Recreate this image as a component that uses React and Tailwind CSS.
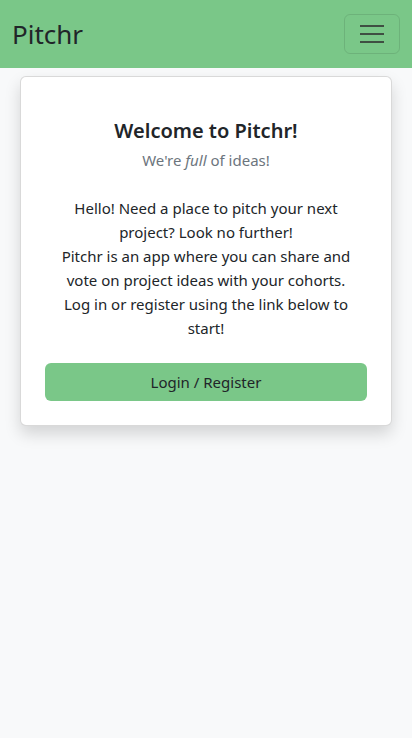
import React from 'react';

const App = () => {
  return (
    <div className="min-h-[738px] w-full bg-[#f8f9fa] font-['Noto_Sans',sans-serif] text-[#212529]">
      <nav className="flex h-[68px] items-center justify-between bg-[#7ac788] pl-3 pr-3">
        <span className="text-[26px] leading-none">Pitchr</span>
        <button className="flex h-[40px] w-[56px] items-center justify-center rounded-[6px] border border-black/10">
          <svg width="26" height="22" viewBox="0 0 26 22">
            <path d="M1 3h24M1 11h24M1 19h24" stroke="#3f4f42" strokeWidth="2" />
          </svg>
        </button>
      </nav>
      <div className="px-5 pt-2">
        <div className="rounded-[6px] border border-black/15 bg-white px-6 pb-6 pt-10 text-center shadow-[0_8px_16px_rgba(0,0,0,0.15)]">
          <h1 className="text-[20px] font-semibold leading-[28px]">Welcome to Pitchr!</h1>
          <p className="mt-[3px] text-[15px] leading-6 text-[#6c757d]">
            We're <em>full</em> of ideas!
          </p>
          <p className="mt-6 px-3 text-[15px] leading-6">
            Hello! Need a place to pitch your next project? Look no further!
            <br />
            Pitchr is an app where you can share and vote on project ideas with your cohorts. Log in or register using the link below to start!
          </p>
          <button className="mt-[23px] h-[38px] w-full rounded-[6px] bg-[#7ac788] text-[15px] text-[#212529]">Login / Register</button>
        </div>
      </div>
    </div>
  );
};

export default App;
